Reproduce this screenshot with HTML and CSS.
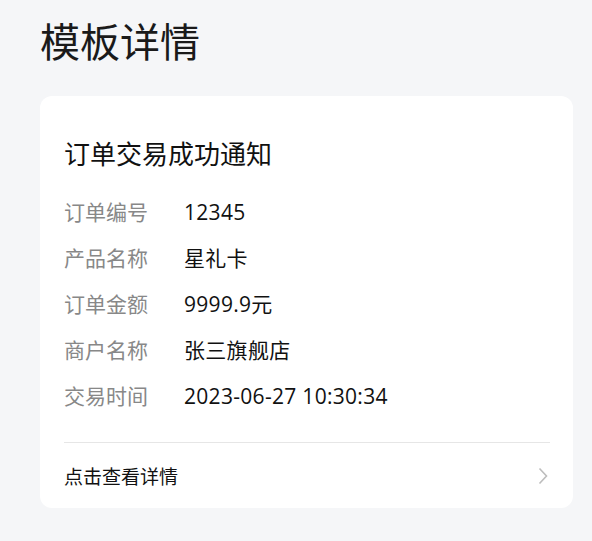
FILE: index.html
```html
<!DOCTYPE html>
<html lang="zh-CN">
<head>
    <meta charset="UTF-8">
    <meta name="viewport" content="width=device-width, initial-scale=1.0">
    <title>模板详情</title>
    <link rel="stylesheet" href="styles.css">
</head>
<body>
    <div class="page">
        <h1 class="page-title">模板详情</h1>

        <div class="tpl-card">
            <h3 class="tpl-title">订单交易成功通知</h3>

            <div class="tpl-rows">
                <div class="tpl-row">
                    <span class="tpl-label">订单编号</span>
                    <span class="tpl-value">12345</span>
                </div>
                <div class="tpl-row">
                    <span class="tpl-label">产品名称</span>
                    <span class="tpl-value">星礼卡</span>
                </div>
                <div class="tpl-row">
                    <span class="tpl-label">订单金额</span>
                    <span class="tpl-value">9999.9元</span>
                </div>
                <div class="tpl-row">
                    <span class="tpl-label">商户名称</span>
                    <span class="tpl-value">张三旗舰店</span>
                </div>
                <div class="tpl-row">
                    <span class="tpl-label">交易时间</span>
                    <span class="tpl-value">2023-06-27 10:30:34</span>
                </div>
            </div>

            <a href="#" class="tpl-link">
                <span>点击查看详情</span>
                <svg class="tpl-arrow" width="10" height="18" viewBox="0 0 10 18">
                    <path d="M1.5 1.5 L8.5 9 L1.5 16.5" fill="none" stroke="#bdbdbd" stroke-width="1.6"/>
                </svg>
            </a>
        </div>
    </div>
</body>
</html>
```

FILE: styles.css
```css
* {
    margin: 0;
    padding: 0;
    box-sizing: border-box;
}

body {
    font-family: "Open Sans", "Noto Sans CJK SC", sans-serif;
    background: #f5f6f8;
    color: #111;
}

.page {
    padding: 14px 19px 0 40px;
}

.page-title {
    font-size: 40px;
    font-weight: 400;
    line-height: 56px;
    color: #1a1a1a;
}

.tpl-card {
    margin-top: 26px;
    background: #fff;
    border-radius: 12px;
    padding: 40px 23px 0 24px;
}

.tpl-title {
    font-size: 26px;
    font-weight: 400;
    line-height: 36px;
    color: #111;
}

.tpl-rows {
    margin-top: 17px;
}

.tpl-row {
    display: flex;
    align-items: baseline;
    height: 46px;
    line-height: 46px;
}

.tpl-label {
    width: 120px;
    flex-shrink: 0;
    font-size: 21px;
    color: #888;
}

.tpl-value {
    font-size: 21px;
    letter-spacing: 0.3px;
    color: #111;
}

.tpl-link {
    display: flex;
    align-items: center;
    justify-content: space-between;
    margin-top: 23px;
    height: 66px;
    border-top: 1px solid #e6e6e6;
    font-size: 19px;
    color: #111;
    text-decoration: none;
}

.tpl-arrow {
    margin-right: 2px;
}
```
